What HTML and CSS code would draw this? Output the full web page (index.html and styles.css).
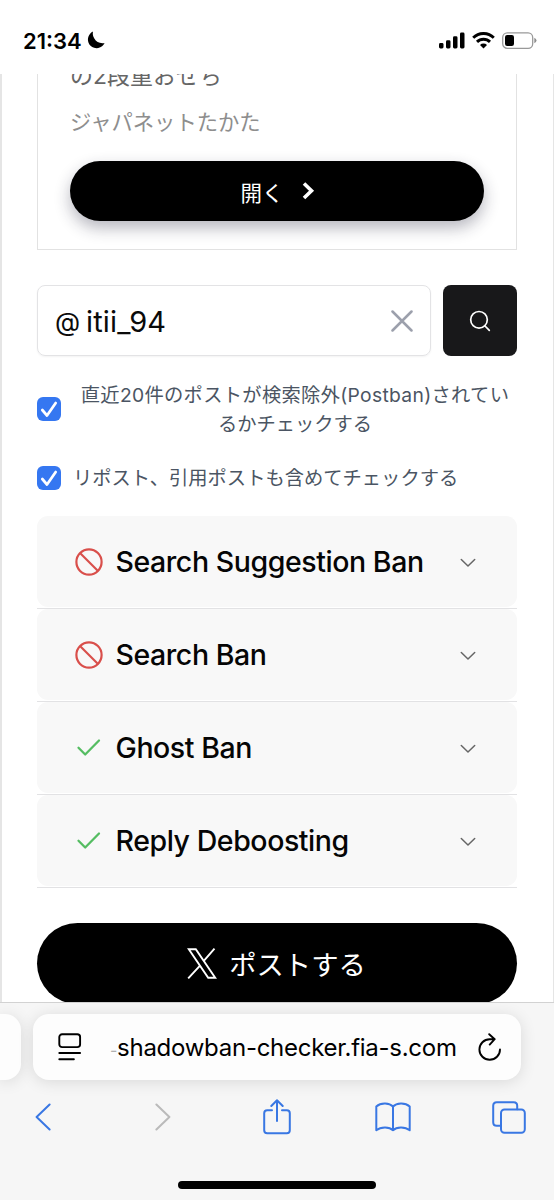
FILE: index.html
```html
<!DOCTYPE html>
<html lang="ja">
<head>
<meta charset="utf-8">
<title>Shadowban Checker</title>
<link rel="stylesheet" href="styles.css">
</head>
<body>
<div class="phone">
  <header class="status">
    <span class="time">21:34</span>
    <svg class="moon" width="18" height="18" viewBox="0 0 18 18"><path d="M6 .6A8.700 8.700 0 1 0 17.600 12A9.700 9.700 0 0 1 6 .6Z"/></svg>
    <div class="status-icons">
      <svg width="26" height="17" viewBox="0 0 26 17"><rect x="0" y="11" width="4.500" height="5.500" rx="1.400"/><rect x="7" y="8.300" width="4.500" height="8.200" rx="1.400"/><rect x="14" y="4.300" width="4.500" height="12.200" rx="1.400"/><rect x="21" y=".5" width="4.500" height="16" rx="1.400"/></svg>
      <svg width="23" height="17" viewBox="0 0 23 17"><g fill="none" stroke="#000" stroke-width="2.900"><path d="M1.200 5.700a14.600 14.600 0 0 1 20.600 0"/><path d="M5 9.900a9.200 9.200 0 0 1 13 0"/></g><path d="M11.500 16.500L8 13a5 5 0 0 1 7 0Z"/></svg>
      <svg width="35" height="17" viewBox="0 0 35 17"><rect x=".7" y=".8" width="30" height="15.500" rx="4.600" fill="none" stroke="#999" stroke-width="1.300"/><rect x="3" y="3" width="9" height="11" rx="2.200"/><path d="M32.300 5.800q2.200 1 2.200 2.700t-2.200 2.700Z" fill="#8e8e8e"/></svg>
    </div>
  </header>

  <main class="page">
    <section class="ad">
      <p class="ad-title">の2段重おせち</p>
      <p class="ad-brand">ジャパネットたかた</p>
      <a class="ad-button"><span>開く</span><svg width="13" height="18" viewBox="0 0 13 18"><path d="M2 1.500l7.500 7.300L2 16" fill="none" stroke="#fff" stroke-width="3.600"/></svg></a>
    </section>

    <form class="search">
      <div class="field">
        <span class="at">@</span><span class="name">itii_94</span>
        <svg class="clear" width="22" height="22" viewBox="0 0 22 22"><path d="M1.500 1.500l19 19M20.500 1.500l-19 19" fill="none" stroke="#9ca0ac" stroke-width="2.500" stroke-linecap="round"/></svg>
      </div>
      <div class="go"><svg width="22" height="22" viewBox="0 0 22 22" fill="none" stroke="#fff" stroke-width="1.700" stroke-linecap="round"><circle cx="10" cy="9.800" r="8.300"/><path d="M16 16l4.300 4.300"/></svg></div>
    </form>

    <label class="check check-first">
      <svg class="box" width="24" height="24" viewBox="0 0 24 24"><rect width="24" height="24" rx="6"/><path d="M5.300 13l4.700 5.500L18.700 6"/></svg>
      <span class="check-text centered"><span class="line-fit">直近20件のポストが検索除外(Postban)されてい</span><br>るかチェックする</span>
    </label>
    <label class="check check-second">
      <svg class="box" width="24" height="24" viewBox="0 0 24 24"><rect width="24" height="24" rx="6"/><path d="M5.300 13l4.700 5.500L18.700 6"/></svg>
      <span class="check-text">リポスト、引用ポストも含めてチェックする</span>
    </label>

    <div class="results">
      <div class="row"><div class="panel">
        <svg class="mark ban" width="28" height="28" viewBox="0 0 28 28"><circle cx="14" cy="14" r="12.600"/><path d="M5 5l18 18"/></svg>
        <span class="label">Search Suggestion Ban</span>
        <svg class="chev" width="16" height="10" viewBox="0 0 16 10"><path d="M1.300 1.500L8 8l6.700-6.500"/></svg>
      </div></div>
      <div class="row"><div class="panel">
        <svg class="mark ban" width="28" height="28" viewBox="0 0 28 28"><circle cx="14" cy="14" r="12.600"/><path d="M5 5l18 18"/></svg>
        <span class="label">Search Ban</span>
        <svg class="chev" width="16" height="10" viewBox="0 0 16 10"><path d="M1.300 1.500L8 8l6.700-6.500"/></svg>
      </div></div>
      <div class="row"><div class="panel">
        <svg class="mark ok" width="28" height="28" viewBox="0 0 28 28"><path d="M3.500 13.800l6.700 6.700L24 6.500"/></svg>
        <span class="label">Ghost Ban</span>
        <svg class="chev" width="16" height="10" viewBox="0 0 16 10"><path d="M1.300 1.500L8 8l6.700-6.500"/></svg>
      </div></div>
      <div class="row"><div class="panel">
        <svg class="mark ok" width="28" height="28" viewBox="0 0 28 28"><path d="M3.500 13.800l6.700 6.700L24 6.500"/></svg>
        <span class="label">Reply Deboosting</span>
        <svg class="chev" width="16" height="10" viewBox="0 0 16 10"><path d="M1.300 1.500L8 8l6.700-6.500"/></svg>
      </div></div>
    </div>

    <a class="post"><svg width="30" height="31" viewBox="0 0 30 31" fill="none" stroke="#fff" stroke-width="1.900"><path d="M1.800 1.200h7l19.400 28.600h-7z"/><path d="M27.500.6L16.800 12.800M13 17.600L1.200 30.400"/></svg><span>ポストする</span></a>
  </main>

  <footer class="browser">
    <div class="tabs">
      <div class="tab-prev"></div>
      <div class="tab">
        <svg width="24" height="28" viewBox="0 0 24 28" fill="none" stroke="#000" stroke-width="1.900" stroke-linecap="round"><rect x="1.300" y="1.300" width="20.800" height="12.800" rx="2.800"/><path d="M1.300 20h20.800M1.300 26.300h14.600"/></svg>
        <span class="url"><span class="fade">-</span>shadowban-checker.fia-s.com</span>
        <svg class="reload" width="24" height="28" viewBox="0 0 24 28" fill="none" stroke="#000" stroke-width="1.900" stroke-linecap="round" stroke-linejoin="round"><path d="M22 16.500A10.300 10.300 0 1 1 11.700 6.200H16.600M11.200 1.200L16.700 6.200 11.700 11.600"/></svg>
      </div>
    </div>
    <nav class="tools">
      <svg width="16" height="28" viewBox="0 0 16 28"><path d="M14.600 1.500L1.600 14l13 12.500"/></svg>
      <svg class="off" width="16" height="28" viewBox="0 0 16 28"><path d="M1.400 1.500l13 12.500-13 12.500"/></svg>
      <svg width="28" height="36" viewBox="0 0 28 36"><path d="M9 11.200H4.200q-3 0-3 3v17q0 3 3 3h19.600q3 0 3-3v-17q0-3-3-3H19M14 22V1.500M8.300 7L14 1.300 19.700 7"/></svg>
      <svg width="36" height="30" viewBox="0 0 36 30"><path d="M18 4.500C14.500.8 6 .2 1.300 4.500V28.300C6 24.500 14.500 24.800 18 28.300 21.500 24.800 30 24.500 34.700 28.300V4.500C30 .2 21.500.8 18 4.500V28.300"/></svg>
      <svg width="34" height="33" viewBox="0 0 34 33"><rect x="9" y="8.500" width="23.800" height="23.300" rx="3.500"/><path d="M8.500 24.800H4.700q-3.500 0-3.500-3.500V4.700q0-3.500 3.500-3.500h17q3.500 0 3.500 3.500v3.500"/></svg>
    </nav>
    <div class="home"></div>
  </footer>
</div>
</body>
</html>
```
FILE: styles.css
```css
* { box-sizing: border-box; }
body { margin: 0; background: #fff; font-family: Inter, "Noto Sans CJK JP", sans-serif; }
p { margin: 0; }
svg { display: block; flex: none; }
.phone { width: 554px; height: 1200px; display: flex; flex-direction: column; overflow: hidden; }

.status { height: 74px; flex: none; display: flex; align-items: flex-start; padding: 0 17px 0 23px; }
.time { width: 64px; margin-top: 28px; font-size: 22px; line-height: 26px; font-weight: 600; letter-spacing: 0; white-space: nowrap; }
.moon { margin-top: 31px; }
.status-icons { margin: 32px 0 0 auto; display: flex; gap: 7px; }

.page { height: 928px; flex: none; overflow: hidden; padding: 0 36px 0 35px; border: solid #e5e5e5; border-width: 0 1px 0 2px; display: flex; flex-direction: column; }
.ad { height: 176px; flex: none; border: 1px solid #e2e2e2; border-top: 0; padding: 0 32px; display: flex; flex-direction: column; }
.ad-title { margin-top: -15px; font-size: 23px; line-height: 34px; color: #666; white-space: nowrap; }
.ad-brand { margin-top: 13px; font-size: 21.300px; line-height: 32px; color: #8e8e8e; white-space: nowrap; }
.ad-button { margin-top: 23px; height: 60px; flex: none; border-radius: 30px; background: #000; color: #fff; display: flex; align-items: center; justify-content: center; gap: 18px; padding-left: 1px; font-size: 21.500px; box-shadow: 0 7px 16px rgba(30, 30, 55, .32); }

.search { margin-top: 35px; height: 71px; flex: none; display: flex; gap: 12px; }
.field { flex: 1; border: 1.500px solid #e3e3e5; border-radius: 8px; display: flex; align-items: center; padding: 1px 17px 0; font-size: 29px; color: #0a0a0a; box-shadow: 0 1px 2px rgba(0, 0, 0, .05); }
.at { width: 31px; font-size: 26px; }
.name { letter-spacing: .15px; }
.clear { margin-left: auto; }
.go { width: 74px; border-radius: 8px; background: #18181a; display: flex; align-items: center; justify-content: center; }

.check { display: flex; align-items: center; flex: none; }
.box rect { fill: #3577f1; }
.box path { fill: none; stroke: #fff; stroke-width: 2.700; stroke-linecap: round; stroke-linejoin: round; }
.check-text { font-size: 19.300px; line-height: 29px; color: #4b5563; margin-left: 12px; padding-top: 2px; white-space: nowrap; }
.centered { flex: 1; text-align: center; }
.line-fit { letter-spacing: .3px; }
.check-first { margin-top: 24px; height: 58px; }
.check-second { margin-top: 25px; height: 29px; }

.results { margin-top: 24px; flex: none; }
.row { height: 93.100px; border-bottom: 1.500px solid #e2e2e4; padding-bottom: 1px; }
.panel { height: 100%; background: #f8f8f8; border-radius: 11px; display: flex; align-items: center; padding: 0 41px 0 37.500px; }
.mark { fill: none; stroke-width: 2.200; }
.ban { stroke: #d94f4b; }
.ok { stroke: #55bd62; stroke-width: 2.300; stroke-linecap: round; stroke-linejoin: round; }
.label { margin-left: 13px; font-size: 28.500px; font-weight: 500; letter-spacing: -.43px; white-space: nowrap; color: #050505; }
.chev { margin: 2px 0 0 auto; fill: none; stroke: #666; stroke-width: 1.500; stroke-linecap: round; stroke-linejoin: round; }

.post { margin-top: 35px; height: 81px; flex: none; border-radius: 41px; background: #000; color: #fff; display: flex; align-items: center; justify-content: center; gap: 12px; padding-right: 1px; font-size: 27.300px; }
.post span { padding-bottom: 2px; }

.browser { height: 198px; flex: none; border-top: 1px solid #d2d2d2; background: #f6f6f6; display: flex; flex-direction: column; align-items: center; }
.tabs { width: 554px; padding-top: 11px; display: flex; gap: 12px; }
.tab-prev { width: 21px; height: 66px; border-radius: 0 16px 16px 0; background: #fdfdfd; box-shadow: 0 2px 16px rgba(0, 0, 0, .12); }
.tab { width: 488px; height: 66px; border-radius: 16px; background: #fdfdfd; box-shadow: 0 2px 16px rgba(0, 0, 0, .12); display: flex; align-items: center; padding: 0 19.500px 0 25px; }
.url { margin-left: 28px; font-size: 24px; letter-spacing: -.27px; white-space: nowrap; color: #000; }
.fade { color: #b0b0b0; font-size: 16px; }
.reload { margin-left: auto; }
.tools { width: 554px; height: 74px; display: grid; grid-template-columns: 85px 155px 74px 158px 74px; align-items: center; justify-items: center; fill: none; stroke: #3977e3; stroke-width: 2; stroke-linecap: round; stroke-linejoin: round; }
.off { stroke: #bababa; }
.home { width: 198px; height: 8px; border-radius: 4px; background: #000; margin-top: 27px; }
```
